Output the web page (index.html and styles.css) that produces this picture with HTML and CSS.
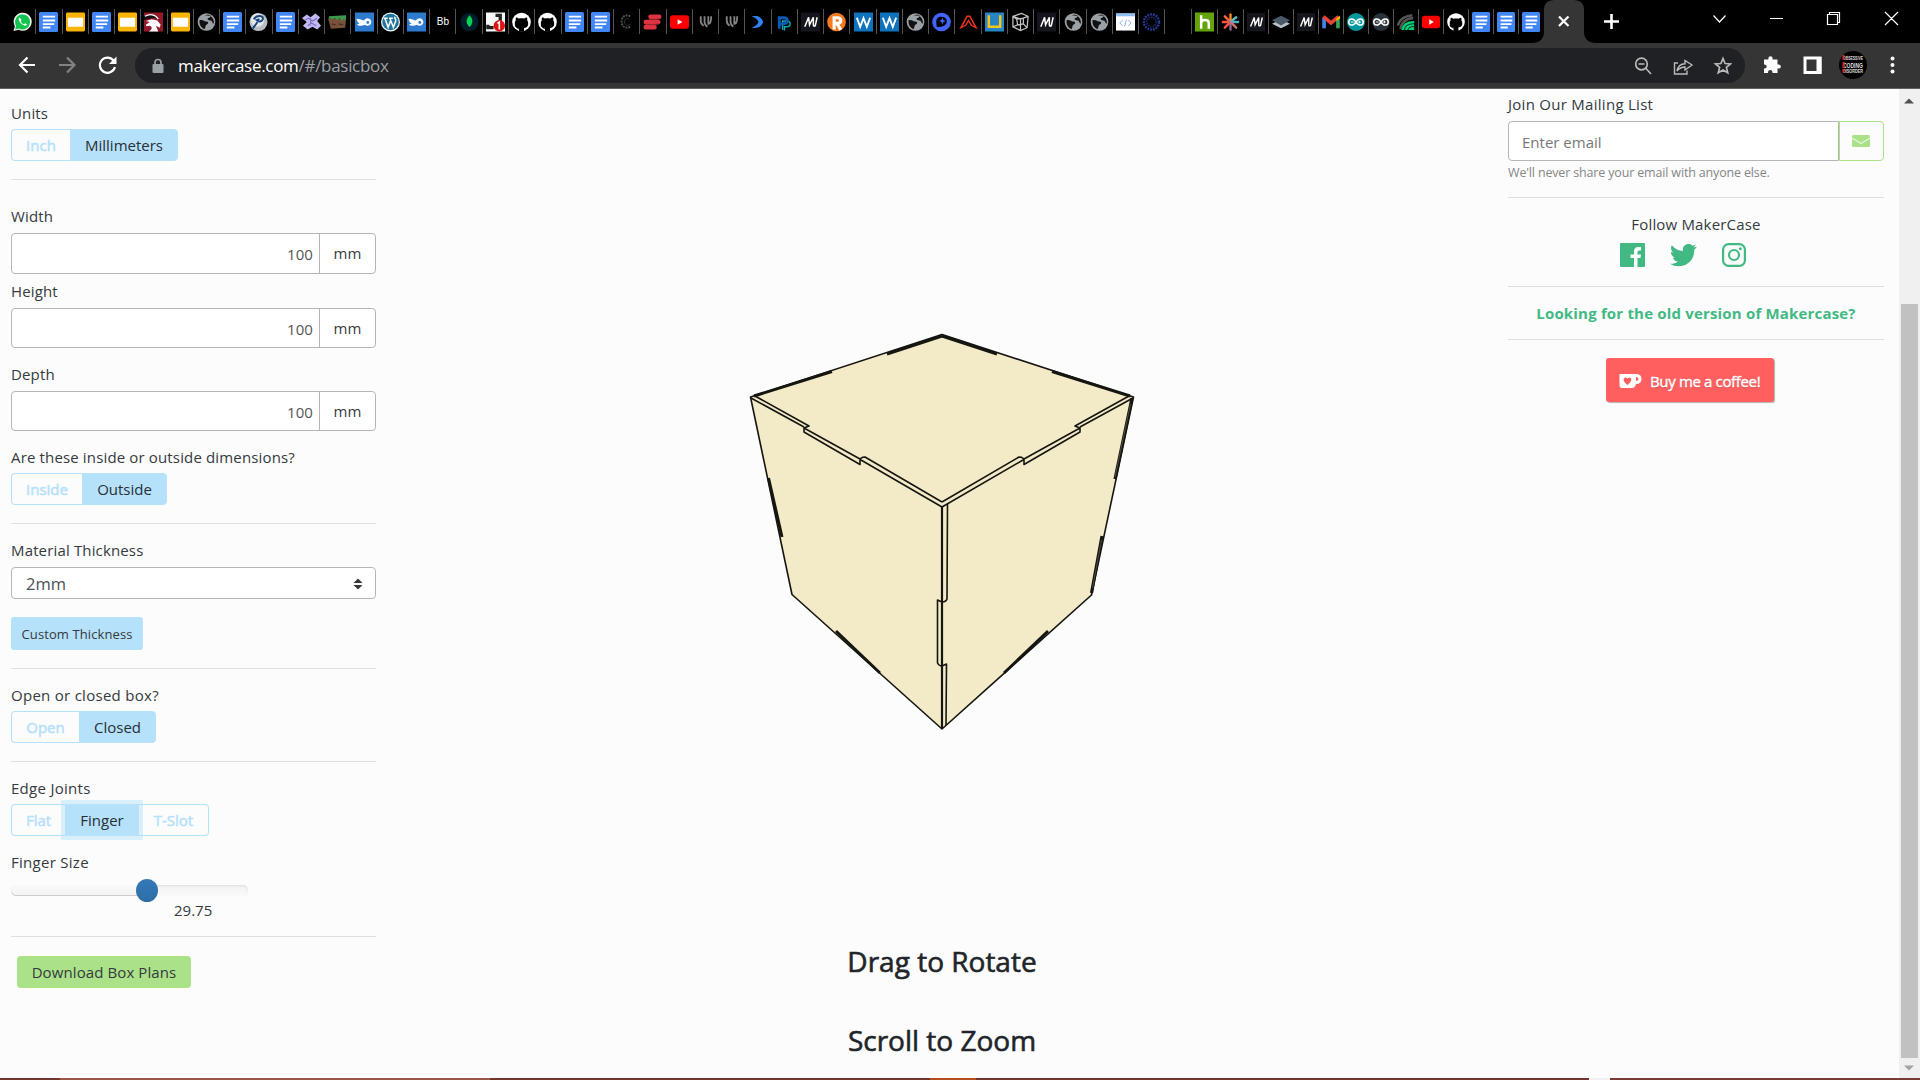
FILE: index.html
```html
<!DOCTYPE html>
<html lang="en">
<head>
<meta charset="utf-8">
<title>MakerCase - Basic Box</title>
<link rel="stylesheet" href="styles.css">
</head>
<body>
<svg class="defs" aria-hidden="true">
  <symbol id="docs" viewBox="0 0 20 20" preserveAspectRatio="none"><rect width="20" height="20" rx="1.5" fill="#4285f4"/><path d="M4 4.7h13M4 8.5h13M4 12.2h12M4 15.5h8" stroke="#fff" stroke-width="1.8"/></symbol>
  <symbol id="slides" viewBox="0 0 20 20"><rect width="20" height="20" rx="1.5" fill="#f9b404"/><rect x="2" y="5.5" width="16" height="9.5" fill="#fff"/></symbol>
  <symbol id="whatsapp" viewBox="0 0 20 20"><path d="M.5 19.5 2 14.5A9.5 9.5 0 1 1 6 18.2z" fill="#f4f4f4"/><path d="M2.2 17.8 3.3 14A7.9 7.9 0 1 1 6.2 16.8z" fill="#12c34c"/><path d="M7 5.2c-1.900 1-.9 3.600 1.300 6s5.500 3.700 6.600 1.500l-2-1.300-1.400 1c-1.200-.3-2.900-2-3.300-3.300l.8-1.400z" fill="#fff"/></symbol>
  <symbol id="globe" viewBox="0 0 20 20"><circle cx="10" cy="10" r="9.300" fill="#9ba0a5"/><path d="M2.800 8c3-1 5 1.500 7.500 1.500 2 .3 2 2.600 0 3-1.700.3-.9 3.300-2.500 5C4.500 16 2 13 2.800 8zM8 3c2-1.200 5.500-.7 6.500.5-1 2.500-2 2-3.200 2.500-.6 1.600 1 2.500 3.500 2.300 1.500.6 1.300 3.700 3 3.200.3-4-2-7-4.500-8" fill="#111"/></symbol>
  <symbol id="dragon" viewBox="0 0 20 20"><rect width="20" height="20" fill="#941a2b"/><path d="M0 4C6 0 14 3 15.500 8L11 5.500 0 8z" fill="#141014"/><path d="m2 9 6-2 6 1.500 3.500 4.500-1 3-4-2 2.500 6H5c4-2 4-5 1-6l-3.500.5-.5-1.500L6 10z" fill="#fff"/><path d="M1 4c5-3 11-2 14 3" stroke="#fff" stroke-width="1.200" fill="none"/></symbol>
  <symbol id="pin" viewBox="0 0 20 20"><circle cx="10" cy="10" r="9.500" fill="#b9bec4"/><circle cx="9" cy="8" r="7" fill="#e4e7e9"/><path d="M5 7c3-5 11-4 9.500.3C13 11 9 9 8 8l3-1M9 10l-5 7" stroke="#17467f" stroke-width="2" fill="none"/></symbol>
  <symbol id="cross" viewBox="0 0 20 20"><path d="m0 6 5-4 4 3 5-4 5 4-3 4 4 5-4 4-5-3-5 3-5-4 4-4z" fill="#c3baf3"/><path d="m3 8 4-2 4 3 5-3M6 14l4-3 5 3M9 6v8" stroke="#7d6fc0" stroke-width="1.200" fill="none"/></symbol>
  <symbol id="grass" viewBox="0 0 20 20"><path d="m0 6 19 1-1 9-15 1z" fill="#77513a"/><path d="m1 4 18-1v5l-3-1-1 2-3-3-2 2-3-2-2 1-4-1z" fill="#3c9a4d"/><path d="m4 12 4 1m3-1 5 1" stroke="#473024" stroke-width="1.500"/></symbol>
  <symbol id="fish" viewBox="0 0 20 20"><rect width="20" height="20" fill="#2c7bcf"/><path d="M1.500 6.500c4 0 6 1.500 8 2a4 4 0 1 1 1 4.500C7 14.500 3 14 2 12.500l3-1C3 11 2 9 1.500 6.500z" fill="#fff"/><circle cx="13.500" cy="10.500" r="1.500" fill="#2c7bcf"/></symbol>
  <symbol id="wordpress" viewBox="0 0 20 20"><circle cx="10" cy="10" r="10" fill="#eef5f8"/><circle cx="10" cy="10" r="8.700" fill="#21759b"/><path d="M3 6h4M8.500 6h4M4.300 6.500l3.200 9L10 9M9.500 6.500l3.500 9L15.500 9C16 7 14 6 14.500 4.500" stroke="#fff" stroke-width="1.600" fill="none"/></symbol>
  <symbol id="mongo" viewBox="0 0 20 20"><circle cx="10" cy="10" r="9.500" fill="#021e2b"/><path d="M10 3c4 4.500 4 8 .4 12h-.8C6 11 6 7.500 10 3z" fill="#00d650"/></symbol>
  <symbol id="badge" viewBox="0 0 20 20"><rect width="20" height="20" fill="#f7f7f7"/><path d="M2 13v3h6M10 3h5v7" stroke="#222" stroke-width="3.500" fill="none"/><circle cx="14" cy="14" r="6" fill="#df1111"/><path d="m12 11.500 2-1.500v8" stroke="#fff" stroke-width="1.700" fill="none"/></symbol>
  <symbol id="github" viewBox="0 0 20 20"><circle cx="10" cy="10" r="9.800" fill="#fff"/><path d="M7.300 20v-3.800c-3.500-.5-4.500-2.500-4.300-5 0-1.500.4-2 1-3-.3-1.200-.2-2 .2-3 1.200 0 2 .6 3 1.200 2-.5 3.600-.5 5.600 0 1-.6 1.800-1.200 3-1.200.4 1 .5 1.800.2 3 .6 1 1 1.500 1 3 .2 2.500-.8 4.500-4.300 5V20z" fill="#000"/><path d="M3 14c2 0 1.700 3 4.500 2.600" stroke="#000" stroke-width="1.200" fill="none"/></symbol>
  <symbol id="carc" viewBox="0 0 20 20"><path d="M14 4C8 1 4 6 5 11s5 6 9 4" stroke="#555" stroke-width="2" stroke-dasharray="2 1" fill="none"/><path d="M13 7c-3-2-5 0-5 3s3 5 6 2" stroke="#383838" fill="none"/></symbol>
  <symbol id="express" viewBox="0 0 20 20"><path d="M8 4.500h9M3 10h13M3 15.500h9" stroke="#df3342" stroke-width="5" stroke-linecap="round"/><path d="M6 7.300h8c2 0 2-1.500 2-1.500M5 12.800h8c2 0 2-1.500 2-1.500" stroke="#92222c" fill="none"/></symbol>
  <symbol id="youtube" viewBox="0 0 20 20"><rect y="3" width="20" height="14" rx="3" fill="#f00"/><path d="m8 7 5 3-5 3z" fill="#fff"/></symbol>
  <symbol id="wing" viewBox="0 0 20 20"><path d="M5 4v5q0 3 3 5M9 4v6q0 3 3 5M13 4v8q3 0 3-8" stroke="#858585" stroke-width="1.900" fill="none"/></symbol>
  <symbol id="chev" viewBox="0 0 20 20"><path d="M4 4c7-1 10 1 12 6-2 5-5 7-12 6 4-2 6-3 7-6-1-3-3-4-7-6z" fill="#3182f6"/></symbol>
  <symbol id="pp" viewBox="0 0 20 20"><path d="M8 18.500V9h4q4 0 4 3t-4 3h-2v4" stroke="#11adab" stroke-width="1.500" fill="none"/><path d="M4.500 17V5.500H9q4 0 4 3T9 12H6" stroke="#075ab5" stroke-width="3" fill="none"/></symbol>
  <symbol id="mm" viewBox="0 0 20 20"><rect width="20" height="20" fill="#15151d"/><path d="M4 15 8 5l1 8 4-8v8q0 2 2 1l2-9" stroke="#fff" stroke-width="1.600" fill="none"/></symbol>
  <symbol id="rr" viewBox="0 0 20 20"><circle cx="10" cy="10" r="9.800" fill="#f47a20"/><path d="M7.500 18V5.500h3q4 0 4 3t-4 3h-3m3 0 4 7" stroke="#fff" stroke-width="3.300" fill="none"/></symbol>
  <symbol id="ww" viewBox="0 0 20 20"><rect width="20" height="20" fill="#0e72bd"/><path d="M3 5.500 6.500 15 10 6l3.500 9L17 5.500" stroke="#fff" stroke-width="2" fill="none"/></symbol>
  <symbol id="mapbox" viewBox="0 0 20 20"><circle cx="10" cy="10" r="9.800" fill="#4264fb"/><path d="M5 15c-1.500-8 0-10.500 5-10.500s7.500 5 4 8.500c-2 2-5 2.500-9 2z" fill="#03040a"/><path d="m11 5.500 1 2.500 2.500 1-2.500 1-1 2.500-1-2.500-2.500-1 2.500-1z" fill="#4264fb"/></symbol>
  <symbol id="aa" viewBox="0 0 20 20"><path d="M2 16 8.500 4h3L18 16l-5-2.500-3-5-3 5z" stroke="#ee3524" stroke-width="1.500" fill="none"/></symbol>
  <symbol id="uu" viewBox="0 0 20 20"><rect width="20" height="20" fill="#2785c5"/><path d="M4 3v12h12V3" stroke="#f5c51c" stroke-width="2.600" fill="none"/></symbol>
  <symbol id="wire" viewBox="0 0 20 20"><path d="m2 4 9-3 7 3-1 12-7 3-8-4zM2 4l8 3 8-3M10 7v12M6 7l7-1v6l-6 1zM2 15l5-2M17 16l-4-4M6 7 2 4" stroke="#c4c4c4" stroke-width="1.300" fill="none"/></symbol>
  <symbol id="code" viewBox="0 0 20 20"><rect y="1" width="20" height="18" fill="#fff"/><path d="M0 2.500h20" stroke="#8fc0f4" stroke-width="3"/><path d="m7 8-3 3 3 3m6-6 3 3-3 3M11 7.500l-2 7" stroke="#7fa9d8" fill="none"/></symbol>
  <symbol id="wheel" viewBox="0 0 20 20"><circle cx="10" cy="10" r="8" fill="none" stroke="#273a97" stroke-width="2.500" stroke-dasharray="2 1"/><circle cx="10" cy="10" r="5" fill="none" stroke="#1c2861" stroke-width="2" stroke-dasharray="1.500 1"/></symbol>
  <symbol id="hh" viewBox="0 0 20 20"><rect width="20" height="20" fill="#65a30a"/><path d="M6.500 3v14m0-6q0-3 4-3t4 3v6" stroke="#fff" stroke-width="2.600" fill="none"/></symbol>
  <symbol id="aster" viewBox="0 0 20 20"><g stroke-width="2.500" stroke-linecap="round"><path d="M10 9V2" stroke="#ff8a1d"/><path d="m9 9-5-5" stroke="#ff6540"/><path d="m11 9 5-4" stroke="#69b7bc"/><path d="M10 10H2" stroke="#fa5544"/><path d="M10 10h8" stroke="#51afca"/><path d="m9 11-5 5" stroke="#ff5446"/><path d="M10 11v7" stroke="#8b6b95"/><path d="m11 11 5 5" stroke="#d97067"/></g></symbol>
  <symbol id="layers" viewBox="0 0 20 20"><path d="m0 12 10-5 10 5-10 5z" fill="#b9c0c6"/><path d="m0 8 10-5 10 5-10 6z" fill="#4a5a68"/></symbol>
  <symbol id="gmail" viewBox="0 0 20 20"><path d="M2.300 5v12" stroke="#4285f4" stroke-width="4"/><path d="M17.700 5v12" stroke="#34a853" stroke-width="4"/><path d="m1.500 4 8.500 7 8.500-7" stroke="#ea4335" stroke-width="4" fill="none"/><path d="M16 6v3l4-3V3z" fill="#fbbc04"/></symbol>
  <symbol id="arduino" viewBox="0 0 20 20"><circle cx="10" cy="10" r="10" fill="#00979d"/><path d="M10 10C7 5 2 6 2 10s5 5 8 0 8-4 8 0-5 5-8 0z" fill="none" stroke="#fff" stroke-width="1.700"/><path d="M4.300 10h3m5 0h3M14 8.500v3" stroke="#fff"/></symbol>
  <symbol id="arduinodark" viewBox="0 0 20 20"><circle cx="10" cy="10" r="10" fill="#293238"/><path d="M10 10C7 5 2 6 2 10s5 5 8 0 8-4 8 0-5 5-8 0z" fill="none" stroke="#fff" stroke-width="1.700"/><path d="M4.300 10h3m5 0h3M14 8.500v3" stroke="#fff"/></symbol>
  <symbol id="radar" viewBox="0 0 20 20"><path d="M1 14Q3 4 17 2.500M4 18Q5 7 18 5.500" stroke="#555" stroke-width="2.800" fill="none"/><path d="M5 19Q6 9 19 9v10z" fill="#00d27a"/><path d="M8 19q1-7 11-7m-7 7q1-4 7-4" stroke="#043a25" stroke-width="1.200" fill="none"/></symbol>
</svg>

<header class="browser">
  <div class="tabstrip">
    <div class="tabs tabs-a">
      <i><svg><use href="#whatsapp"/></svg></i><i><svg><use href="#docs"/></svg></i><i><svg><use href="#slides"/></svg></i><i><svg><use href="#docs"/></svg></i><i><svg><use href="#slides"/></svg></i><i><svg><use href="#dragon"/></svg></i><i><svg><use href="#slides"/></svg></i><i><svg><use href="#globe"/></svg></i><i><svg><use href="#docs"/></svg></i><i><svg><use href="#pin"/></svg></i><i><svg><use href="#docs"/></svg></i><i><svg><use href="#cross"/></svg></i><i><svg><use href="#grass"/></svg></i><i><svg><use href="#fish"/></svg></i><i><svg><use href="#wordpress"/></svg></i><i><svg><use href="#fish"/></svg></i><i><b>Bb</b></i><i><svg><use href="#mongo"/></svg></i><i><svg><use href="#badge"/></svg></i><i><svg><use href="#github"/></svg></i><i><svg><use href="#github"/></svg></i><i><svg><use href="#docs"/></svg></i><i><svg><use href="#docs"/></svg></i><i><svg><use href="#carc"/></svg></i><i><svg><use href="#express"/></svg></i><i><svg><use href="#youtube"/></svg></i><i><svg><use href="#wing"/></svg></i><i><svg><use href="#wing"/></svg></i><i><svg><use href="#chev"/></svg></i><i><svg><use href="#pp"/></svg></i><i><svg><use href="#mm"/></svg></i><i><svg><use href="#rr"/></svg></i><i><svg><use href="#ww"/></svg></i><i><svg><use href="#ww"/></svg></i><i><svg><use href="#globe"/></svg></i><i><svg><use href="#mapbox"/></svg></i><i><svg><use href="#aa"/></svg></i><i><svg><use href="#uu"/></svg></i>
    </div>
    <div class="tabs tabs-b">
      <i><svg><use href="#wire"/></svg></i><i><svg><use href="#mm"/></svg></i><i><svg><use href="#globe"/></svg></i><i><svg><use href="#globe"/></svg></i><i><svg><use href="#code"/></svg></i><i><svg><use href="#wheel"/></svg></i><i></i><i><svg><use href="#hh"/></svg></i><i><svg><use href="#aster"/></svg></i>
    </div>
    <div class="tabs tabs-c">
      <i><svg><use href="#mm"/></svg></i><i><svg><use href="#layers"/></svg></i><i><svg><use href="#mm"/></svg></i><i><svg><use href="#gmail"/></svg></i><i><svg><use href="#arduino"/></svg></i><i><svg><use href="#arduinodark"/></svg></i><i><svg><use href="#radar"/></svg></i><i><svg><use href="#youtube"/></svg></i><i><svg><use href="#github"/></svg></i><i><svg><use href="#docs"/></svg></i><i><svg><use href="#docs"/></svg></i><i><svg><use href="#docs"/></svg></i>
    </div>
    <svg class="active-tab" width="64" height="43" viewBox="0 0 64 43"><path d="M0 43q12 0 12-12V10Q12 0 22 0h20q10 0 10 10v21q0 12 12 12z" fill="#353535"/><path d="m27 16.500 9.500 9.500m0-9.500L27 26" stroke="#fff" stroke-width="2.200"/></svg>
    <svg class="window-controls" width="324" height="43" viewBox="0 0 324 43" fill="none" stroke="#fff"><path d="M8 21.500h15M15.500 14v15" stroke-width="2.600"/><path d="m117.500 15.500 6 6.500 6-6.500M174 18.500h13M231.500 14.500h10v10h-10zM233.500 14.500v-2h10v10h-2M289 12l13 13m0-13-13 13" stroke-width="1.200"/></svg>
  </div>
  <div class="toolbar">
    <svg class="nav" width="135" height="45" viewBox="0 0 135 45" fill="none" stroke-width="2.200"><path d="M35 22H20.500m7-7.500-7.500 7.500 7.500 7.500" stroke="#fff"/><path d="M59 22h15m-7-7.500 7.500 7.500-7.500 7.500" stroke="#828282"/><path d="M113.500 17.500a7.600 7.600 0 1 0 1.400 6.500" stroke="#fff"/><path d="M116.500 13.500V21h-7.500z" fill="#fff"/></svg>
    <div class="omnibox">
      <svg class="lock" width="12" height="16" viewBox="0 0 12 16"><rect x=".5" y="6" width="11" height="9" rx="1" fill="#9aa0a6"/><path d="M3 7V4.500q0-3 3-3t3 3V7" fill="none" stroke="#9aa0a6" stroke-width="1.700"/></svg>
      <div class="url">makercase.com<span>/#/basicbox</span></div>
      <svg class="actions" width="98" height="20" viewBox="0 0 98 20" fill="none" stroke="#b9babc" stroke-width="1.700"><circle cx="7.500" cy="8" r="5.800"/><path d="m11.500 12 5.500 6M4.500 8h6"/><path d="M44 7h-3.500v11H53v-3.500M43 15c1-5 4-7 8-7.200V4.500L58 9l-7 5V11c-3.500 0-5.500 1-8 4z" stroke-width="1.400"/><path d="m89 2.500 2.100 5 5.400.4-4.100 3.500 1.300 5.300-4.700-2.800-4.700 2.800 1.300-5.300-4.100-3.500 5.400-.4z"/></svg>
    </div>
    <svg class="ext" width="175" height="45" viewBox="0 0 175 45"><path d="M19 16.500h4.500c-1-4.500 5-4.500 4 0h5v5c4.500-1 4.500 5 0 4V30h-5c.5-4-5-4-4.500 0h-4v-4.500c3.500.5 3.500-4.500 0-4z" fill="#fff"/><rect x="60" y="15" width="15" height="14.500" fill="none" stroke="#fff" stroke-width="3"/><path d="M71.500 14h5v17h-5z" fill="#fff"/><circle cx="108" cy="22" r="14" fill="#000"/><g font-family="Liberation Sans" font-size="5" font-weight="700" fill="#ddd"><text x="98" y="17" textLength="20" lengthAdjust="spacingAndGlyphs">OBSESSIVE</text><text x="98" y="24.500" textLength="20" font-size="7" lengthAdjust="spacingAndGlyphs">CODING</text><text x="98" y="30" textLength="20" lengthAdjust="spacingAndGlyphs">DISORDER</text></g><path d="M98.500 12v5m0 2v6m0 1v4" stroke="#d52828" stroke-width="2"/><circle cx="147.500" cy="15.500" r="2" fill="#fff"/><circle cx="147.500" cy="22" r="2" fill="#fff"/><circle cx="147.500" cy="28.500" r="2" fill="#fff"/></svg>
  </div>
</header>

<div class="viewport">
<main class="page">
  <form class="controls">
    <section class="units">
      <label class="l-even">Units</label>
      <div class="group"><span class="w59">Inch</span><span class="on w108">Millimeters</span></div>
    </section>
    <section class="dims">
      <label>Width</label>
      <div class="field"><output>100</output><span>mm</span></div>
      <label class="l-height">Height</label>
      <div class="field short"><output>100</output><span>mm</span></div>
      <label class="l-depth">Depth</label>
      <div class="field short"><output>100</output><span>mm</span></div>
      <label class="l-inout l-even">Are these inside or outside dimensions?</label>
      <div class="group"><span class="w71">Inside</span><span class="on w85">Outside</span></div>
    </section>
    <section class="material">
      <label>Material Thickness</label>
      <div class="select">2mm<svg width="10" height="12" viewBox="0 0 10 12"><path d="M.5 5 5 .5 9.500 5zM.5 7 5 11.500 9.500 7z" fill="#343a40"/></svg></div>
      <div class="custom">Custom Thickness</div>
    </section>
    <section class="lid">
      <label class="l-even">Open or closed box?</label>
      <div class="group"><span class="w68">Open</span><span class="on w77">Closed</span></div>
    </section>
    <section class="joints">
      <label class="l-even">Edge Joints</label>
      <div class="group"><span class="w54">Flat</span><span class="on focus w74">Finger</span><span class="last w70">T-Slot</span></div>
      <label class="l-size l-even">Finger Size</label>
      <div class="slider"><div class="range"></div><div class="thumb"></div></div>
      <div class="value">29.75</div>
    </section>
    <div class="download">Download Box Plans</div>
  </form>

  <div class="stage">
    <svg class="box" width="400" height="410" viewBox="742 325 400 410">
      <defs>
        <g id="half">
          <path d="M751 398 804 427M755 396 809 426 804 428V432L860 464.500V459L804 428M860 461 Q860 457 865 457L942 502M861 460 942 507"/>
          <path d="M836 631 880 673" stroke-width="2.800"/>
          <path d="M754 396 832 371.500M887 354 942 336" stroke-width="3"/>
        </g>
      </defs>
      <path d="M750.500 397 942 334.500 1133.500 397 1091.500 595 942 729 792 594.500z" fill="#f3eac7"/>
      <g fill="none" stroke="#161611" stroke-width="1.600" stroke-linejoin="round">
        <path d="M750.500 397 942 334.500 1133.500 397 1091.500 595 942 729 792 594.500z"/>
        <use href="#half"/><use href="#half" transform="matrix(-1 0 0 1 1884 0)"/>
        <path d="M942 507V728" stroke-width="2.200"/>
        <path d="M947.500 504 947 599Q946 602 942 602L937.500 600V663Q939 666 942 666L946.500 664 946 725"/>
        <path d="M768.500 478 782 537" stroke-width="3"/>
        <path d="M1132 398 1115 479M1102 536 1091.500 593" stroke-width="3.200"/>
        <path d="M1130.500 404 1115 477M1101.500 540 1092.500 588" stroke="#77725e" stroke-width=".6"/>
      </g>
    </svg>
    <h4>Drag to Rotate</h4>
    <h4 class="zoom">Scroll to Zoom</h4>
  </div>

  <aside>
    <section class="mail">
      <label>Join Our Mailing List</label>
      <div class="email"><span>Enter email</span><button type="button"><svg width="18" height="12" viewBox="0 0 18 12"><rect width="18" height="12" rx="1.500" fill="#abe188"/><path d="m0 3 9 5.500L18 3" fill="none" stroke="#fcfcfc" stroke-width="1"/></svg></button></div>
      <small>We'll never share your email with anyone else.</small>
    </section>
    <section class="follow">
      <p>Follow MakerCase</p>
      <div class="social">
        <svg width="25" height="24" viewBox="0 0 25 24"><path d="M1 0h23q1 0 1 1v22q0 1-1 1h-6.500v-9h3l.5-3.500h-3.500v-2q0-2 2-2H21V4h-3q-4 0-4 4.500v3h-3.500V15H14v9H1q-1 0-1-1V1q0-1 1-1z" fill="#42b983"/></svg>
        <svg width="27" height="23" viewBox="0 0 27 23"><path d="M27 2.700 24.300 5.700C24.500 16 17 22.300 8.500 22.300 5.500 22.300 2.500 21.500 0 19.800c3 .3 5.500-.4 8-2.300-2.500 0-4.300-1.500-5.100-3.800h2.400C2.600 13 1 10.800 1 8l2.500.7C1 6.800.4 4 1.800 1.300 4.500 4.700 8.300 6.700 13 7 12 3 15 0 18.500 0c1.600 0 3 .6 4.100 1.700L26 .5l-2.400 3z" fill="#42b983"/></svg>
        <svg width="24" height="24" viewBox="0 0 24 24" fill="none" stroke="#42b983" stroke-width="2.200"><rect x="1.100" y="1.100" width="21.800" height="21.800" rx="5.500"/><circle cx="12" cy="12" r="5"/><circle cx="18.300" cy="5.800" r="1.500" fill="#42b983" stroke="none"/></svg>
      </div>
    </section>
    <section class="old">Looking for the old version of Makercase?</section>
    <a class="kofi"><svg width="23" height="16" viewBox="0 0 23 16"><path d="M1 1h16q5.500 0 5.500 5T17 11q-1 4-4 4H3q-2.500 0-2.500-3V1.500z" fill="#fff"/><path d="M17 4v4q2.500 0 2.500-2T17 4z" fill="#ff5f5f"/><path d="M8.500 12C2 7.500 5 2.500 8.500 5.500 12 2.500 15 7.500 8.500 12z" fill="#ff5f5f"/></svg><span>Buy me a coffee!</span></a>
  </aside>
</main>
<div class="scrollbar">
  <svg width="10" height="6" viewBox="0 0 10 6"><path d="m0 5.500 5-5 5 5z" fill="#505050"/></svg>
  <div class="bar"></div>
  <svg width="10" height="6" viewBox="0 0 10 6"><path d="m0 .5 5 5 5-5z" fill="#a3a3a3"/></svg>
</div>
</div>
<footer class="taskbar"></footer>
</body>
</html>
```

FILE: styles.css
```css
* { box-sizing: border-box; }
body {
  margin: 0;
  width: 1920px;
  height: 1080px;
  overflow: hidden;
  display: flex;
  flex-direction: column;
  background: #fcfcfc;
  color: #343a40;
  font: 15px/24px "Open Sans", "Noto Sans", sans-serif;
}
svg { display: block; flex: none; }
.defs { display: none; }

/* browser frame */
.tabstrip { display: flex; height: 43px; padding-left: 10px; background: #000; }
.tabs { display: grid; flex: none; grid-auto-flow: column; grid-auto-columns: minmax(0, 1fr); align-items: center; }
.tabs-a { width: 998px; }
.tabs-b { width: 236px; }
.tabs-c { width: 300px; }
.tabs i {
  display: flex;
  align-items: center;
  justify-content: center;
  height: 25px;
  border-right: 1px solid #555;
  font-style: normal;
}
.tabs svg { width: 19px; height: 20px; }
.tabs-c svg { width: 18px; }
.tabs-c i:last-child { border-color: transparent; }
.tabs b { font: 10px/20px "Liberation Sans", sans-serif; color: #fff; }
.active-tab { margin-left: -12px; }
.toolbar { display: flex; height: 46px; background: #353535; border-bottom: 1px solid #606162; }
.omnibox {
  display: flex;
  align-items: center;
  width: 1610px;
  height: 35px;
  margin-top: 5px;
  padding: 0 13px 0 17px;
  border-radius: 18px;
  background: #202124;
}
.url { flex: 1; margin-left: 14px; color: #fff; font-size: 17px; letter-spacing: -0.3px; }
.url span { color: #9aa0a6; }

/* page */
.viewport { display: flex; flex: 1; min-height: 0; }
.page { display: flex; width: 1899px; }
.controls { width: 365px; margin-left: 11px; padding-top: 12px; }
.controls section { border-bottom: 1px solid #dfdfdf; padding-bottom: 18px; margin-bottom: 15px; }
label { display: block; height: 28px; line-height: 22px; letter-spacing: 0.15px; }
.l-even { line-height: 24px; }
.lid label, .joints label { letter-spacing: 0.28px; }
.controls .units { margin-bottom: 25px; }
.controls .material, .controls .lid { margin-bottom: 14px; }
.group { display: flex; height: 32px; text-align: center; }
.group span { border: 1px solid #b5e1fb; line-height: 30px; color: #b5e1fb; -webkit-text-stroke: 0.5px #b5e1fb; }
.group span:first-child { border-radius: 4px 0 0 4px; border-right: 0; }
.group span:last-child { border-radius: 0 4px 4px 0; }
.group .on { background: #b5e1fb; color: #292f35; -webkit-text-stroke: 0; }
.group .last { border-left: 0; }
.group .focus { box-shadow: 0 0 0 4px rgba(181, 225, 251, 0.5); }
.w54 { width: 54px; } .w59 { width: 59px; } .w68 { width: 68px; } .w70 { width: 70px; }
.w71 { width: 71px; } .w74 { width: 74px; } .w77 { width: 77px; } .w85 { width: 85px; } .w108 { width: 108px; }
.field { display: flex; height: 41px; border: 1px solid #b5b5b5; border-radius: 4px; background: #fff; line-height: 39px; }
.field.short { height: 40px; line-height: 38px; }
.field output { flex: 1; padding: 1px 6px 0 0; text-align: right; color: #555; letter-spacing: 0.1px; }
.field span { width: 56px; border-left: 1px solid #b5b5b5; text-align: center; }
.l-height { margin-top: 6px; }
.l-depth { margin-top: 15px; }
.l-inout { margin-top: 14px; }
.select {
  display: flex;
  align-items: center;
  justify-content: space-between;
  height: 32px;
  padding: 2px 12px 0 14px;
  border: 1px solid #b5b5b5;
  border-radius: 4px;
  background: #fff;
  font-size: 16.5px;
  color: #495057;
}
.custom { width: 132px; height: 33px; margin-top: 18px; border-radius: 3px; background: #b5e1fb; text-align: center; font-size: 13px; line-height: 34px; letter-spacing: 0.1px; }
.controls .joints { padding-bottom: 14px; }
.l-size { margin-top: 14px; height: 35px; }
.slider {
  display: flex;
  align-items: center;
  width: 237px;
  height: 11px;
  border-radius: 5px;
  background: linear-gradient(#f2f2f2, #fafafa);
  box-shadow: inset 0 1px 2px #ddd;
}
.range { width: 136px; height: 11px; border-radius: 5px; background: linear-gradient(#fafafa, #f2f2f2); box-shadow: inset 0 -1px 0 #ccc; }
.thumb { width: 22px; height: 23px; margin-left: -11px; border-radius: 50%; background: linear-gradient(#337ab7, #2e6da4); }
.value { margin: 2px 0 0 163px; }
.download { width: 174px; height: 32px; margin: 19px 0 0 6px; border-radius: 4px; background: #abe188; text-align: center; line-height: 32px; letter-spacing: 0.1px; }

.stage { display: flex; flex-direction: column; align-items: center; width: 1132px; padding-top: 236px; }
h4 { margin: 208px 0 0; font-size: 28px; font-weight: 400; line-height: 36px; color: #212529; -webkit-text-stroke: 0.6px #212529; }
h4.zoom { margin-top: 43px; }

aside { width: 376px; padding-top: 4px; }
aside section { border-bottom: 1px solid #dfdfdf; }
.mail { height: 105px; }
.mail label { letter-spacing: 0.28px; }
.email { display: flex; height: 40px; }
.email span { flex: 1; padding-left: 13px; border: 1px solid #b5b5b5; border-radius: 4px 0 0 4px; background: #fff; color: #777; line-height: 40px; }
.email button { display: flex; align-items: center; justify-content: center; width: 45px; padding: 0 1px 0 0; border: 1px solid #abe188; border-radius: 0 4px 4px 0; background: #fcfcfc; }
small { display: block; font-size: 12.5px; line-height: 24px; letter-spacing: -0.16px; color: #868686; }
.follow { height: 89px; padding-top: 14px; text-align: center; }
.follow p { margin: 0; letter-spacing: 0.18px; }
.social { display: flex; align-items: center; gap: 25px; margin: 7px 0 0 112px; }
.old { height: 53px; color: #42b983; font-weight: 700; line-height: 52px; letter-spacing: 0.18px; text-align: center; }
.kofi {
  display: flex;
  align-items: center;
  gap: 8px;
  width: 168px;
  height: 44px;
  margin: 18px 0 0 98px;
  padding: 2px 0 0 13px;
  border-radius: 3px;
  background: #ff5f5f;
  box-shadow: 1px 1px 1px rgba(0, 0, 0, 0.3);
  color: #fff;
  font: 15px/42px "Open Sans", sans-serif;
  letter-spacing: -0.35px;
  -webkit-text-stroke: 0.4px #fff;
  text-shadow: 0 1px 1px rgba(0, 0, 0, 0.2);
}
.scrollbar { display: flex; flex-direction: column; align-items: center; width: 21px; padding: 9px 1px 0 0; background: #f0f0f0; }
.bar { width: 17px; height: 754px; margin: 200px 0 7px; background: #c1c1c1; }
.taskbar { height: 2px; background: linear-gradient(90deg, #73352e 60px, #9a5547 60px 490px, #73352e 490px 930px, #b34e1c 930px 976px, #73352e 976px 1589px, #f0f0f0 1589px 1610px, #7b3a32 1610px); }
```
